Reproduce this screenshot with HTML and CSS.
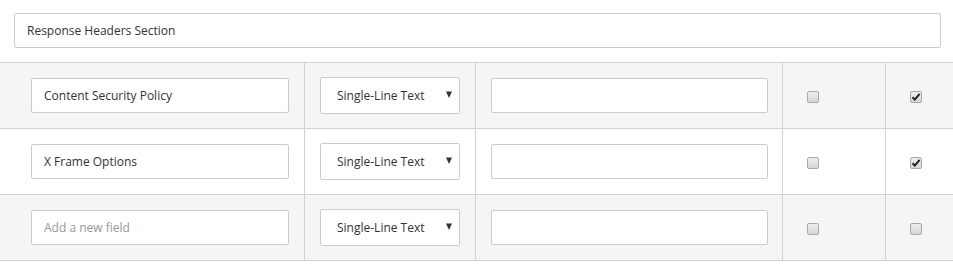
FILE: index.html
```html
<!DOCTYPE html>
<html>
<head>
<meta charset="utf-8">
<link rel="stylesheet" href="styles.css">
</head>
<body>
<div class="page">
  <div class="section">
    <input class="field section-field" type="text" value="Response Headers Section">
  </div>
  <div class="table">
    <div class="row gray">
      <div class="cell c1"><input class="field name" type="text" value="Content Security Policy"></div>
      <div class="cell c2"><div class="select-wrap"><select class="select"><option>Single-Line Text</option></select><svg class="arrow" width="6" height="7" viewBox="0 0 6 7"><path d="M0 0.5H6L3 7Z" fill="#333"/></svg></div></div>
      <div class="cell c3"><input class="field value" type="text"></div>
      <div class="cell c4"><span class="cb"></span></div>
      <div class="cell c5"><span class="cb checked"><svg width="10" height="10" viewBox="0 0 10 10"><path d="M1.5 5.2L3.8 7.6L8.6 1.8" fill="none" stroke="#222" stroke-width="2"/></svg></span></div>
    </div>
    <div class="row">
      <div class="cell c1"><input class="field name" type="text" value="X Frame Options"></div>
      <div class="cell c2"><div class="select-wrap"><select class="select"><option>Single-Line Text</option></select><svg class="arrow" width="6" height="7" viewBox="0 0 6 7"><path d="M0 0.5H6L3 7Z" fill="#333"/></svg></div></div>
      <div class="cell c3"><input class="field value" type="text"></div>
      <div class="cell c4"><span class="cb"></span></div>
      <div class="cell c5"><span class="cb checked"><svg width="10" height="10" viewBox="0 0 10 10"><path d="M1.5 5.2L3.8 7.6L8.6 1.8" fill="none" stroke="#222" stroke-width="2"/></svg></span></div>
    </div>
    <div class="row gray">
      <div class="cell c1"><input class="field name" type="text" placeholder="Add a new field"></div>
      <div class="cell c2"><div class="select-wrap"><select class="select"><option>Single-Line Text</option></select><svg class="arrow" width="6" height="7" viewBox="0 0 6 7"><path d="M0 0.5H6L3 7Z" fill="#333"/></svg></div></div>
      <div class="cell c3"><input class="field value" type="text"></div>
      <div class="cell c4"><span class="cb"></span></div>
      <div class="cell c5"><span class="cb"></span></div>
    </div>
  </div>
</div>
</body>
</html>
```

FILE: styles.css
```css
html, body {
  margin: 0;
  padding: 0;
  background: #fff;
}
body {
  font-family: "Open Sans", "Liberation Sans", sans-serif;
  font-size: 12px;
  color: #333;
}
.page {
  width: 953px;
}
.section {
  padding: 13px 12px 14px 14px;
}
.field {
  box-sizing: border-box;
  display: block;
  height: 35px;
  margin: 0;
  padding: 0 12px;
  border: 1px solid #cccccc;
  border-radius: 2px;
  background: #fff;
  font-family: "Open Sans", "Liberation Sans", sans-serif;
  font-size: 12px;
  color: #333;
  outline: none;
}
.field::placeholder {
  color: #999;
}
.section-field {
  width: 927px;
}
.table {
  border-top: 1px solid #d2d2d2;
}
.row {
  display: grid;
  grid-template-columns: 304px 171px 307px 103px 68px;
  border-bottom: 1px solid #d2d2d2;
  background: #fff;
}
.row.gray {
  background: #f5f5f5;
}
.cell {
  box-sizing: border-box;
  display: flex;
  align-items: center;
  height: 65px;
}
.cell + .cell {
  border-left: 1px solid #d2d2d2;
}
.c1 {
  padding-left: 31px;
}
.name {
  width: 258px;
}
.c2 {
  padding-left: 15px;
}
.select-wrap {
  position: relative;
  width: 140px;
  height: 37px;
}
.select {
  box-sizing: border-box;
  appearance: none;
  -webkit-appearance: none;
  width: 140px;
  height: 37px;
  margin: 0;
  padding: 0 0 0 16px;
  border: 1px solid #cccccc;
  border-radius: 2px;
  background: #fff;
  font-family: "Open Sans", "Liberation Sans", sans-serif;
  font-size: 12px;
  color: #333;
  outline: none;
}
.arrow {
  position: absolute;
  right: 8px;
  top: 14px;
}
.c3 {
  padding-left: 15px;
}
.value {
  width: 277px;
}
.c4, .c5 {
  padding-left: 24px;
}
.cb {
  box-sizing: border-box;
  display: flex;
  align-items: center;
  justify-content: center;
  width: 12px;
  height: 12px;
  margin-top: 2px;
  border: 1px solid #a9a9a9;
  border-radius: 2px;
  background: linear-gradient(#eeeeee, #d6d6d6);
}
.cb svg {
  display: block;
}
```
